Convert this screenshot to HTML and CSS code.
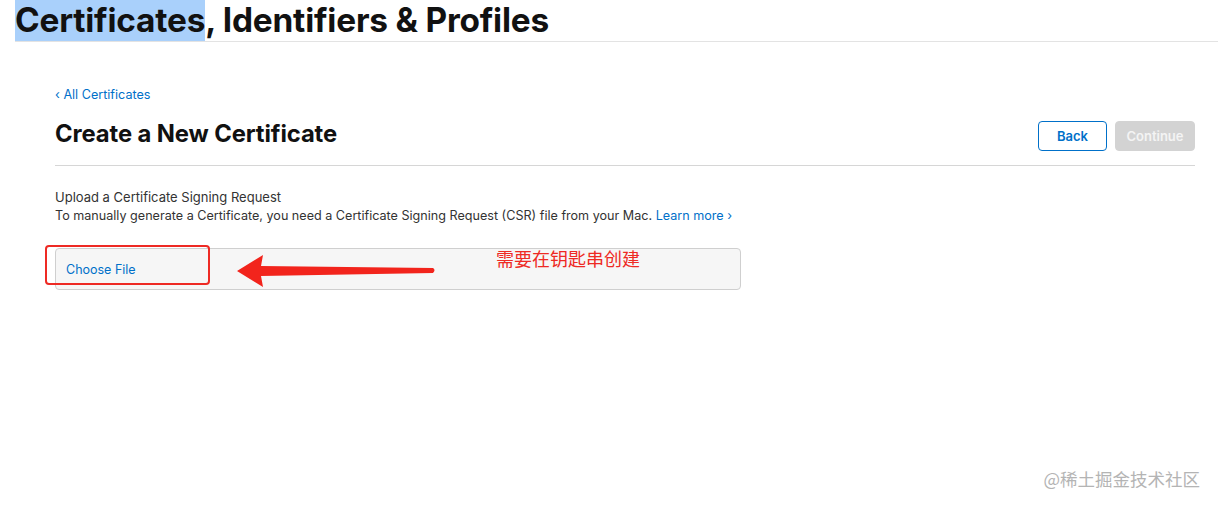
FILE: index.html
```html
<!DOCTYPE html>
<html lang="en">
<head>
  <meta charset="UTF-8" />
  <title>Certificates, Identifiers &amp; Profiles</title>
  <link rel="stylesheet" href="styles.css">
</head>
<body>

  <header class="top">
    <h1><span class="sel">Certificates</span>, Identifiers &amp; Profiles</h1>
  </header>

  <main class="content">
    <a href="#" class="crumb">&lsaquo; All Certificates</a>

    <div class="title-row">
      <h2>Create a New Certificate</h2>
      <div class="actions">
        <button class="btn btn-back">Back</button>
        <button class="btn btn-continue" disabled>Continue</button>
      </div>
    </div>

    <section class="upload">
      <div class="upload-title">Upload a Certificate Signing Request</div>
      <p class="upload-desc">To manually generate a Certificate, you need a Certificate Signing Request (CSR) file from your Mac. <a href="#">Learn more &rsaquo;</a></p>

      <div class="file-box">
        <span class="choose">Choose File</span>
        <span class="mark"></span>
        <svg class="arrow" width="200" height="36" viewBox="0 0 200 36">
          <path d="M0 18 L26 2 L24 13 L196 15 Q199 17 196 20 L24 23 L26 34 Z" fill="#f2241c"/>
        </svg>
        <span class="note">需要在钥匙串创建</span>
      </div>
    </section>
  </main>

  <div class="watermark">@稀土掘金技术社区</div>

</body>
</html>
```

FILE: styles.css
```css
body {
  margin: 0;
  background: #fff;
  color: #1d1d1f;
  font-family: Inter, "Noto Sans", Arial, sans-serif;
  width: 1218px;
  height: 506px;
  position: relative;
  overflow: hidden;
}

.top {
  margin-left: 15px;
  border-bottom: 1px solid #e3e3e3;
  height: 41px;
}

.top h1 {
  margin: 0;
  font-size: 33.4px;
  font-weight: 700;
  line-height: 41px;
  letter-spacing: -0.2px;
  color: #111;
}

.sel {
  background: #a9d0fb;
  display: inline-block;
}

.content {
  padding: 44px 23px 0 55px;
}

.crumb {
  display: block;
  font-size: 12.6px;
  color: #0070c9;
  text-decoration: none;
  line-height: 18px;
}

.title-row {
  display: flex;
  justify-content: space-between;
  align-items: flex-start;
  border-bottom: 1px solid #d6d6d6;
  margin-top: 9px;
  padding-bottom: 14px;
}

.title-row h2 {
  margin: 0;
  padding-top: 7px;
  font-size: 23.8px;
  font-weight: 700;
  line-height: 28px;
  color: #111;
  letter-spacing: -0.1px;
}

.actions {
  display: flex;
  gap: 8px;
  margin-top: 8px;
}

.btn {
  font-family: inherit;
  font-size: 13px;
  font-weight: 600;
  height: 30px;
  border-radius: 4px;
  padding: 0;
}

.btn-back {
  width: 69px;
  background: #fff;
  color: #0070c9;
  border: 1px solid #0070c9;
}

.btn-continue {
  width: 80px;
  background: #d3d3d3;
  color: #f4f4f4;
  border: 1px solid #d3d3d3;
}

.upload {
  margin-top: 23px;
}

.upload-title {
  font-size: 13px;
  color: #333;
  line-height: 17px;
}

.upload-desc {
  margin: 1px 0 0;
  font-size: 12.6px;
  color: #333;
  line-height: 17px;
}

.upload-desc a {
  color: #0070c9;
  text-decoration: none;
}

.file-box {
  position: relative;
  margin-top: 24px;
  width: 684px;
  height: 40px;
  background: #f6f6f6;
  border: 1px solid #cfcfcf;
  border-radius: 4px;
}

.choose {
  position: absolute;
  left: 10px;
  top: 13px;
  font-size: 12.5px;
  color: #0070c9;
}

.mark {
  position: absolute;
  left: -11px;
  top: -4px;
  width: 161px;
  height: 36px;
  border: 2px solid #ee2a24;
  border-radius: 4px;
}

.arrow {
  position: absolute;
  left: 181px;
  top: 4px;
}

.note {
  position: absolute;
  left: 440px;
  top: -4px;
  font-size: 18px;
  color: #ee2a24;
  font-family: "Noto Sans CJK SC", sans-serif;
}

.watermark {
  position: absolute;
  right: 18px;
  bottom: 15px;
  font-size: 17.5px;
  color: #b4b4b4;
  font-family: "Noto Sans CJK SC", sans-serif;
}
```
